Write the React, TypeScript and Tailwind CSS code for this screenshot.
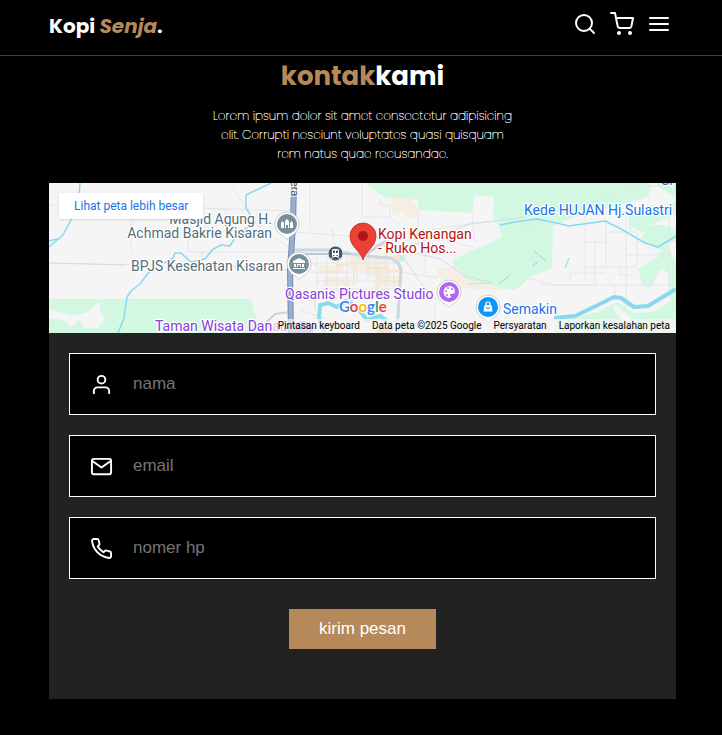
import type { ReactNode } from "react";
import { FiMail, FiMenu, FiPhone, FiSearch, FiShoppingCart, FiUser } from "react-icons/fi";

function Label({ x, y, fill, children, anchor = "start" }: { x: number; y: number; fill: string; children: ReactNode; anchor?: "start" | "end" }) {
  return (
    <text x={x} y={y} fill={fill} textAnchor={anchor} fontSize="14" stroke="#ffffff" strokeWidth="2.5" strokeLinejoin="round" paintOrder="stroke">
      {children}
    </text>
  );
}

function Pin({ x, y, fill, children }: { x: number; y: number; fill: string; children: ReactNode }) {
  return (
    <g transform={`translate(${x} ${y})`}>
      <path d="M0 15.500 C-2 12.500-6 11.500-9 8 A12 12 0 1 1 9 8 C6 11.500 2 12.500 0 15.500Z" fill="#fff" stroke="#b8bcc0" strokeWidth="0.7" />
      <circle r="10" fill={fill} />
      {children}
    </g>
  );
}

function MapDrawing() {
  return (
    <svg viewBox="49 183 627 150" preserveAspectRatio="xMidYMid slice" className="block h-full w-full font-[Roboto,sans-serif]" role="img" aria-label="Peta Kisaran">
      <rect x="49" y="183" width="627" height="150" fill="#f5f5f5" />
      <g fill="#d3f8e2">
        <path d="M49 299H251L260 333H49Z" />
        <path d="M365 183H652L648 197 575 217 553 226 552 268 528 278 515 290 500 288 468 282 464 277 458 277 452 260 502 237 498 225 493 218 494 197 475 195 472 213 418 210 418 200 384 197Z" />
        <path d="M655 183H676V198L667 192 660 188ZM629 215 651 205 676 202V320L668 290 670 275 661 268 651 287 643 286 638 269 661 255 629 243Z" />
        <path d="M555 322 598 312 617 302 634 313 652 312 676 298V333H555Z" />
      </g>
      <g fill="#f5f5f5">
        <path d="M49 309 72 316 86 313 100 301V311L105 319 98 328H85L79 320 70 328 65 321 49 318Z" />
        <path d="M633 228 645 233 640 240 663 252 629 253V230ZM653 206 666 199 664 215 658 211ZM615 304 631 317 627 326 613 310ZM650 225 676 214V230L664 225ZM667 244 676 242V263Z" />
      </g>
      <path d="M392 198H411L418 209V218L408 219 404 212 392 216ZM438 268 458 267 464 279 459 285 438 277ZM461 279 505 288 498 291 460 288Z" fill="#f6eee3" />
      <path d="M319 266H343V274H319ZM324 277H350V286H324ZM350 253H369V270H350ZM365 256H390V276H365ZM379 276H399V286H379Z" fill="#f7eddc" />
      <path d="M397 255H404V261H397Z" fill="#c7f0db" />

      {/* minor streets */}
      <g fill="none" stroke="#e2e6ec" strokeWidth="1">
        <path d="M49 205 205 208 292 211M49 263 145 265M131 219H205V235M131 219V252M188 231V252H203V260M205 208 230 210M230 183 257 225 292 250M200 265V252H290M292 232 380 238 475 223 524 218M362 183V216M362 217H390V205H380V199M390 218 400 225M472 213 475 241M418 210V244M400 242 430 235 475 248" />
        <path d="M515 233 553 216 626 190 676 183M585 215V280M606 217V267M626 190V308M606 232H637V265M585 242H606M585 267H637M595 243V285H540M570 280V273H605M669 206V284M620 265V275H630M626 255H670M515 290 528 278 538 281 555 285H670M529 183V210M529 200 553 215M615 300V285" />
        <path d="M317 250V298M327 248V305M337 252V298M347 250V290M357 247V282M368 248V281M376 251V292M386 254V291M394 258V289M306 263H394M310 272H399M316 281H400M320 289H400M305 259 318 267M405 243V258M425 245V274M400 272 438 278M435 333V303M300 310 328 320M310 183V230M332 228 335 246M399 245 425 245" />
        <path d="M370 243 440 259 465 276 493 283M404 258 420 282 436 299M468 284 493 283" stroke="#d5dbe3" />
        <path d="M49 263 125 265M205 265 292 270M400 251 435 236 470 224 520 218 553 208" stroke="#d4dae3" />
      </g>
      <path d="M307 300H315V310M354 285V265M378 299V268M386 257H399V271H386M366 268H390M336 265H350" fill="none" stroke="#f4e6cf" strokeWidth="2" />
      <path d="M294 250H326L365 256 389 258Q399 260 401 270L400 284 397 333M365 255 390 238 405 233" fill="none" stroke="#cbd6e1" strokeWidth="3" />
      <path d="M294 254H350" fill="none" stroke="#b9c6d4" strokeWidth="2" />
      <path d="M290 312 275 314 266 323 269 326 263 333" fill="none" stroke="#c9d3df" strokeWidth="2" />

      {/* rivers */}
      <g fill="none" stroke="#8bd8ee" strokeWidth="1.5" strokeLinejoin="round">
        <path d="M80 183 79 199 73 216 63 235 49 247M49 241 57 239" />
        <path d="M118 333 124 318 127 297 131 291 140 284 149 272 173 258 175 253H181L191 262 205 259 212 250 221 245 230 246 237 235 255 222 246 208 246 195 271 183" />
        <path d="M500 225 515 222 537 219 552 222 569 226 605 221 621 229 645 243 658 247 676 236" />
        <path d="M534 251 546 261M532 266 538 262M565 268 569 258M499 284 510 275" strokeWidth="1" />
      </g>
      <path d="M325 333 319 318 320 305 328 303 337 307 346 301 356 306 367 320 380 316 387 321" fill="none" stroke="#8bdce9" strokeWidth="4" />
      <path d="M554 318 575 316 596 306 614 297 621 298 634 307 648 306 676 289" fill="none" stroke="#8bd8ee" strokeWidth="4" strokeLinejoin="round" />

      {/* highway */}
      <path d="M294 183 293 225 290 270 291 333" fill="none" stroke="#718eb8" strokeWidth="6" />
      <path d="M294 183 293 225 290 270 291 333" fill="none" stroke="#9aafcd" strokeWidth="4" />
      <text transform="translate(291 181) rotate(90)" fontSize="11" fill="#3d4650" stroke="#fff" strokeWidth="2" paintOrder="stroke">era</text>

      <Label x={272} y={224} anchor="end" fill="#546e7a">Masjid Agung H.</Label>
      <Label x={272} y={238} anchor="end" fill="#546e7a">Achmad Bakrie Kisaran</Label>
      <Label x={131} y={271} fill="#546e7a">BPJS Kesehatan Kisaran</Label>
      <Label x={285} y={299} fill="#8341d8">Qasanis Pictures Studio</Label>
      <Label x={155} y={331} fill="#8341d8">Taman Wisata Danau</Label>
      <Label x={524} y={215} fill="#1a73e8">Kede HUJAN Hj.Sulastri</Label>
      <Label x={503} y={314} fill="#1a73e8">Semakin</Label>
      <Label x={661} y={185} fill="#3f59c7">Sr</Label>
      <Label x={400} y={342} fill="#e58a45">Rumah makan 1110</Label>
      <circle cx="303" cy="331" r="10" fill="#b58ceb" />
      <circle cx="385" cy="337" r="10" fill="#efb185" />

      <Pin x={287} y={224} fill="#78909c">
        <path d="M-6 4V-1L-4.500-3-3-1V4ZM-2 4V-2Q-2-4 0-5 2-4 2-2V4H1V1H-1V4ZM3 4V-1L4.500-3 6-1V4Z" fill="#fff" />
      </Pin>
      <Pin x={299} y={264} fill="#78909c">
        <path d="M-6-3 0-6 6-3V-1H-6ZM-5 0H-3V3H-5ZM3 0H5V3H3ZM-6 4H6V5H-6ZM-2 0H2V3H1V1H-1V3H-2Z" fill="#fff" />
      </Pin>
      <Pin x={449} y={292} fill="#b366f6">
        <path d="M0-6A6 6 0 1 0 1 6Q3 5 1 3 1 1 4 2 6 1 6-1 5-6 0-6Z" fill="#fff" />
        <g fill="#b366f6"><circle cx="-3" cy="-1" r="1" /><circle cx="-1" cy="-4" r="1" /><circle cx="3" cy="-3" r="1" /><circle cx="-2" cy="3" r="1" /></g>
      </Pin>
      <Pin x={488} y={307} fill="#0d96f2">
        <path d="M-3.500-2H3.500L4.500 4.500H-4.500Z" fill="#fff" />
        <path d="M-2-2V-3Q-2-5 0-5 2-5 2-3V-2" fill="none" stroke="#fff" strokeWidth="1.2" />
        <path d="M-2 0Q0 4 2 0" fill="none" stroke="#0d96f2" />
      </Pin>

      {/* railway station */}
      <circle cx="335.500" cy="253.500" r="7.500" fill="#455a70" stroke="#e8ebef" />
      <rect x="332" y="249" width="7" height="8" rx="1.500" fill="#fff" />
      <path d="M333 250.500H335V253H333ZM336 250.500H338V253H336ZM333 255H334.500V256H333ZM336.500 255H338V256H336.500Z" fill="#455a70" />
      <path d="M333 257 331.500 259M338 257 339.500 259" stroke="#fff" />

      {/* place marker */}
      <path d="M363 260C361 251 350 247 350 236A13 13 0 0 1 376 236C376 247 365 251 363 260Z" fill="#ea4335" stroke="#c5221f" strokeWidth="0.8" />
      <circle cx="363" cy="236" r="5" fill="#b31412" />
      <Label x={378} y={239} fill="#b31412">Kopi Kenangan</Label>
      <Label x={378} y={253} fill="#b31412">- Ruko Hos...</Label>

      <text x="339" y="312" fontSize="15" fontWeight="700" fill="#4285f4" stroke="#fff" strokeWidth="2" paintOrder="stroke" className="font-[Lato,sans-serif]">
        G<tspan fill="#ea4335">o</tspan><tspan fill="#fbbc04">o</tspan><tspan>g</tspan><tspan fill="#34a853">l</tspan><tspan fill="#ea4335">e</tspan>
      </text>
    </svg>
  );
}

function Field({ id, type, placeholder, icon }: { id: string; type: string; placeholder: string; icon: ReactNode }) {
  return (
    <div className="flex h-[62px] items-center border border-white bg-black pl-5">
      <label htmlFor={id} aria-label={placeholder}>{icon}</label>
      <input
        id={id}
        type={type}
        placeholder={placeholder}
        className="ml-5 h-full min-w-0 flex-1 bg-transparent font-['Liberation_Sans',Arial,sans-serif] text-[17px] text-white outline-none placeholder:text-[#757575]"
      />
    </div>
  );
}

export default function App() {
  return (
    <div className="min-h-screen bg-black font-[Poppins,Inter,sans-serif] text-white">
      <header className="flex h-14 items-start justify-between border-b border-[#513d28] pr-[46px] pl-[49px]">
        <a href="#home" className="mt-3 text-xl leading-7 font-bold">
          Kopi <span className="text-[#b6895b] italic">Senja</span>.
        </a>
        <nav className="mt-3 mr-[5px] flex gap-[13px]">
          <button type="button" aria-label="Cari"><FiSearch size={24} /></button>
          <button type="button" aria-label="Keranjang"><FiShoppingCart size={24} /></button>
          <button type="button" aria-label="Menu"><FiMenu size={24} /></button>
        </nav>
      </header>

      <main className="pr-[46px] pb-9 pl-[49px]">
        <h2 className="text-center text-[26px] leading-10 font-bold">
          <span className="text-[#b6895b]">kontak</span>kami
        </h2>
        <p className="mt-[10px] text-center text-xs leading-[19px] font-thin [text-shadow:0_0_0_#fff,0_0_0_#fff]">
          Lorem ipsum dolor sit amet consectetur adipisicing
          <br />
          elit. Corrupti nesciunt voluptates quasi quisquam
          <br />
          rem natus quae recusandae.
        </p>

        <section className="relative mt-5 h-[150px] overflow-hidden">
          <MapDrawing />
          <a href="#peta" className="absolute top-[10px] left-[10px] rounded-xs bg-white px-[15px] py-[5px] font-[Roboto,sans-serif] text-xs leading-4 text-[#1a73e8] shadow-sm">
            Lihat peta lebih besar
          </a>
          <div className="absolute right-0 bottom-0 flex gap-3 bg-[#f5f5f5]/70 px-[6px] font-[Roboto,sans-serif] text-[10px] leading-[14px] text-black">
            <button type="button">Pintasan keyboard</button>
            <span>Data peta ©2025 Google</span>
            <a href="#persyaratan">Persyaratan</a>
            <a href="#laporkan">Laporkan kesalahan peta</a>
          </div>
        </section>

        <form className="flex flex-col gap-5 bg-[#222222] px-5 pt-5 pb-[50px]">
          <Field id="nama" type="text" placeholder="nama" icon={<FiUser size={23} />} />
          <Field id="email" type="email" placeholder="email" icon={<FiMail size={23} />} />
          <Field id="hp" type="tel" placeholder="nomer hp" icon={<FiPhone size={23} />} />
          <button type="button" className="mt-[10px] h-10 self-center bg-[#b6895b] px-[30px] font-['Liberation_Sans',Arial,sans-serif] text-[17px]">
            kirim pesan
          </button>
        </form>
      </main>
    </div>
  );
}
